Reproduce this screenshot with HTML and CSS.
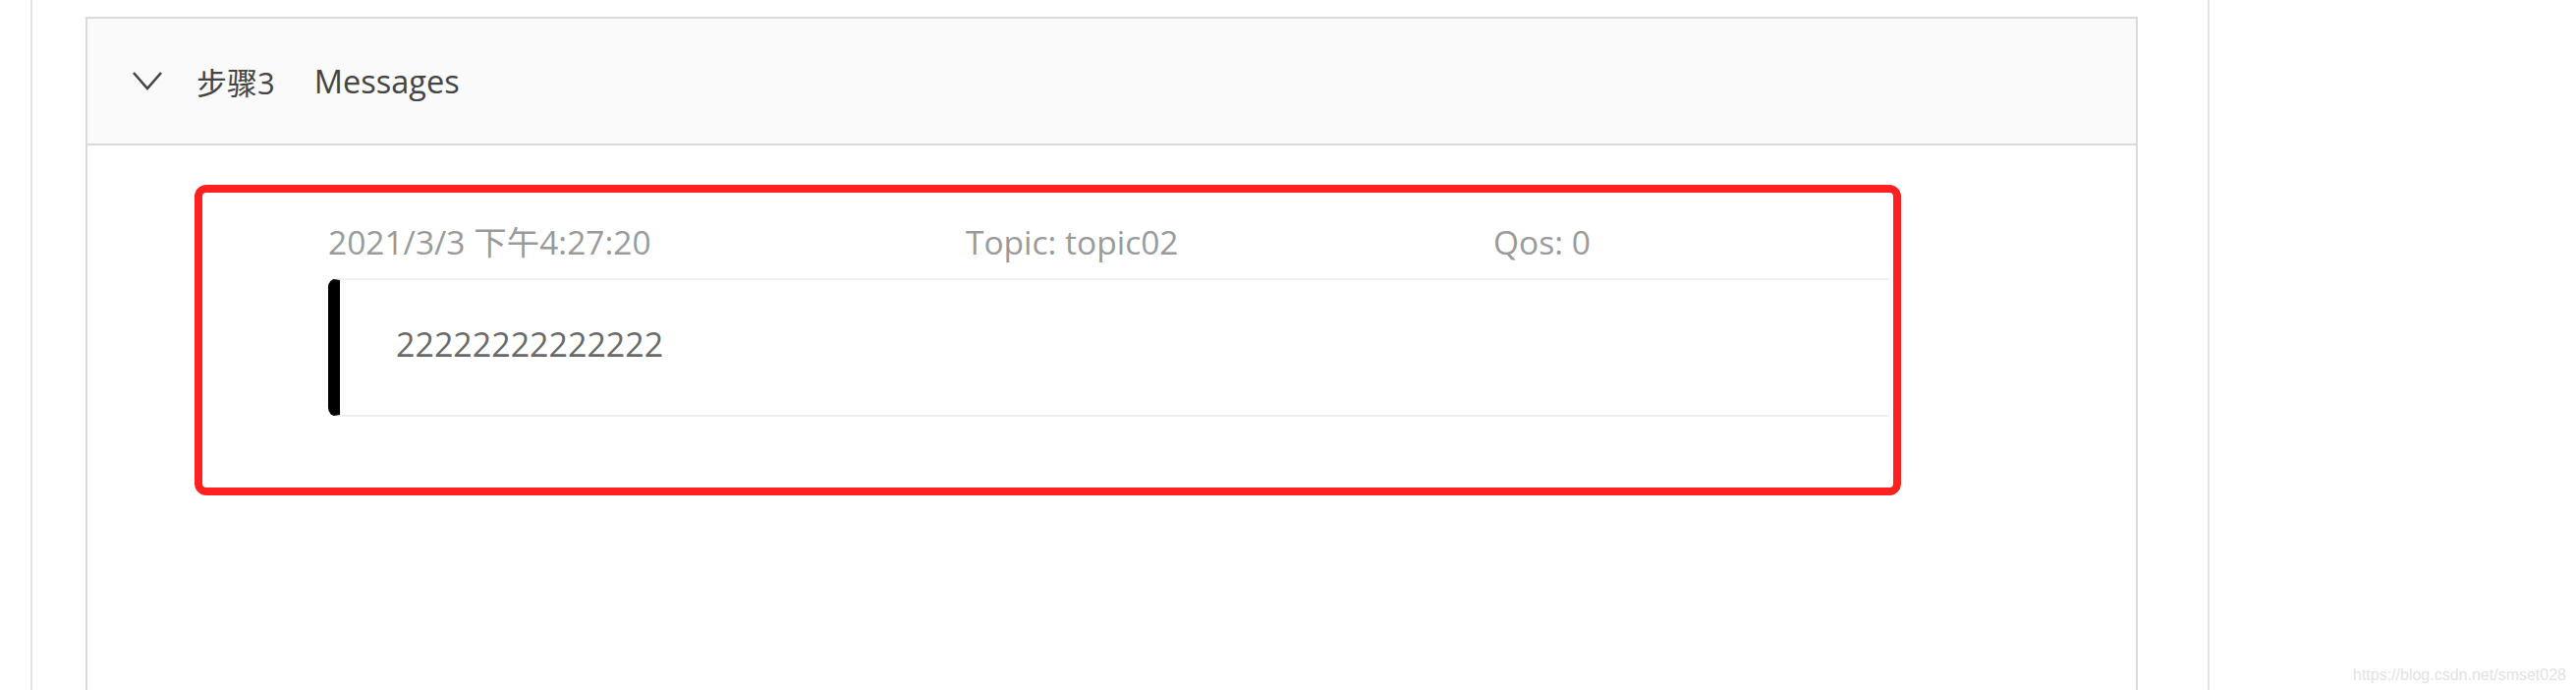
FILE: index.html
```html
<!DOCTYPE html>
<html lang="zh-CN">
<head>
    <meta charset="UTF-8">
    <title>步骤3 Messages</title>
    <link rel="stylesheet" href="styles.css">
</head>
<body>
<div class="page">
    <div class="gutter"></div>

    <div class="main">
        <div class="panel">
            <div class="panel-header">
                <svg class="arrow" width="32" height="22" viewBox="0 0 32 22">
                    <polyline points="2,3 16,19 30,3" fill="none" stroke="#444" stroke-width="2.6"/>
                </svg>
                <span class="step">步骤3</span>
                <span class="title">Messages</span>
            </div>

            <div class="panel-body">
                <!-- 收到的消息 -->
                <div class="msg-card">
                    <div class="msg-meta">
                        <span>2021/3/3 下午4:27:20</span>
                        <span>Topic: topic02</span>
                        <span>Qos: 0</span>
                    </div>
                    <div class="msg-payload">22222222222222</div>
                </div>
            </div>
        </div>
    </div>

    <div class="side"></div>
</div>

<div class="watermark">https://blog.csdn.net/smset028</div>
</body>
</html>
```

FILE: styles.css
```css
body {
    margin: 0;
    background: #fff;
    font-family: "Open Sans", "Noto Sans CJK SC", sans-serif;
    overflow: hidden;
}

.page {
    display: flex;
    height: 702px;
}

.gutter {
    width: 31px;
}

.main {
    display: flex;
    flex-direction: column;
    width: 2216px;
    border-left: 2px solid #e4e4e4;
    padding: 17px 71px 0 54px;
    box-sizing: border-box;
}

.side {
    flex: 1;
    border-left: 2px solid #e4e4e4;
}

.panel {
    flex: 1;
    border: 2px solid #dadada;
    border-bottom: none;
}

.panel-header {
    display: flex;
    align-items: center;
    height: 127px;
    padding-left: 45px;
    background: #fafafa;
    border-bottom: 2px solid #dadada;
    color: #444;
    font-size: 31px;
}

.arrow {
    margin-right: 34px;
    margin-top: -2px;
}

.step {
    margin-right: 40px;
}

.title {
    font-size: 32.5px;
}

.panel-body {
    padding: 40px 239px 0 109px;
}

/* 红框标注 */
.msg-card {
    border: 8px solid #ff2020;
    border-radius: 12px;
    padding: 0 4px 72px 128px;
}

.msg-meta {
    display: grid;
    grid-template-columns: 649px 537px 1fr;
    padding: 30px 0 17px;
    line-height: 40px;
    font-size: 33.5px;
    color: #9a9a9a;
}

.msg-payload {
    border-left: 12px solid #000;
    border-top: 2px solid #efefef;
    border-bottom: 2px solid #efefef;
    border-radius: 9px 0 0 9px;
    padding: 45px 0 52px 57px;
    line-height: 40px;
    font-size: 34px;
    color: #6a6a6a;
}

.watermark {
    position: absolute;
    right: 10px;
    bottom: 6px;
    font-family: "Liberation Sans", sans-serif;
    font-size: 16px;
    color: #e2e2e2;
}
```
